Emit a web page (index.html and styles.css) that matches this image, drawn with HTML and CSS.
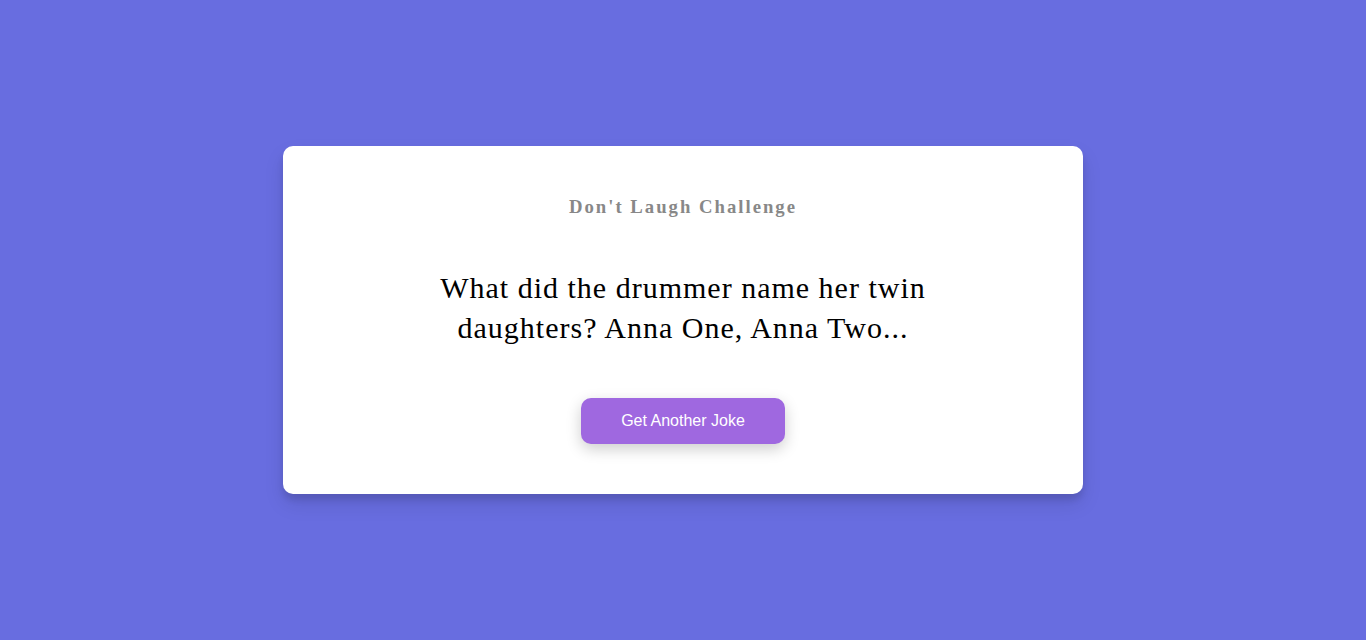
FILE: index.html
```html
<!DOCTYPE html>
<html lang="en">
<head>
<meta charset="utf-8">
<title>Don't Laugh Challenge</title>
<link rel="stylesheet" href="styles.css">
</head>
<body>
<main class="container">
  <h3 class="title">Don't Laugh Challenge</h3>
  <p class="joke">What did the drummer name her twin daughters? Anna One, Anna Two...</p>
  <button class="btn">Get Another Joke</button>
</main>
</body>
</html>
```
FILE: styles.css
```css
* { box-sizing: border-box; }
html, body { height: 100%; }
body {
  margin: 0;
  background: #686de0;
  display: flex;
  align-items: center;
  justify-content: center;
  font-family: "Liberation Serif", "Times New Roman", serif;
}
.container {
  width: 800px;
  background: #fff;
  border-radius: 10px;
  box-shadow: 0 10px 20px rgba(0, 0, 0, 0.1), 0 6px 6px rgba(0, 0, 0, 0.1);
  padding: 50px 20px;
  text-align: center;
  display: flex;
  flex-direction: column;
  align-items: center;
}
.title {
  margin: 0;
  font-size: 1.17em;
  font-weight: bold;
  color: #888;
  letter-spacing: 2px;
}
.joke {
  margin: 50px 0;
  max-width: 540px;
  font-size: 30px;
  line-height: 40px;
  letter-spacing: 1px;
  color: #000;
}
.btn {
  font-family: "Liberation Sans", Arial, sans-serif;
  font-size: 16px;
  color: #fff;
  background: #9f68e0;
  border: 0;
  border-radius: 10px;
  padding: 14px 40px;
  box-shadow: 0 5px 15px rgba(0, 0, 0, 0.2);
  cursor: pointer;
}
```
